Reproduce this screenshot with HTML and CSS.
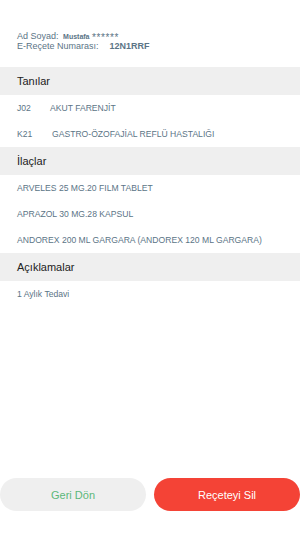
FILE: index.html
```html
<!DOCTYPE html>
<html lang="tr">
<head>
<meta charset="utf-8">
<link rel="stylesheet" href="styles.css">
</head>
<body>
<div class="page">
  <div class="info">
    <div class="line"><span class="lbl">Ad Soyad:</span> <span class="name">Mustafa</span> <span class="stars">******</span></div>
    <div class="line"><span class="lbl">E-Reçete Numarası:</span><span class="no">12N1RRF</span></div>
  </div>
  <div class="band">Tanılar</div>
  <div class="row"><span class="code">J02</span>AKUT FARENJİT</div>
  <div class="row"><span class="code">K21</span><span class="d2">GASTRO-ÖZOFAJİAL REFLÜ HASTALIĞI</span></div>
  <div class="band">İlaçlar</div>
  <div class="row">ARVELES 25 MG.20 FILM TABLET</div>
  <div class="row">APRAZOL 30 MG.28 KAPSUL</div>
  <div class="row">ANDOREX 200 ML GARGARA (ANDOREX 120 ML GARGARA)</div>
  <div class="band">Açıklamalar</div>
  <div class="row">1 Aylık Tedavi</div>
  <div class="spacer"></div>
  <div class="actions">
    <button class="btn back">Geri Dön</button>
    <button class="btn del">Reçeteyi Sil</button>
  </div>
</div>
</body>
</html>
```
FILE: styles.css
```css
* { box-sizing: border-box; }
html, body { margin: 0; padding: 0; background: #fff; }
body { font-family: "Liberation Sans", Arial, sans-serif; }
.page { width: 300px; height: 533px; display: flex; flex-direction: column; }
.info { padding: 31px 0 0 17px; height: 67px; color: #5b7486; font-size: 9px; }
.line { height: 10px; line-height: 10px; white-space: nowrap; }
.name { font-weight: bold; font-size: 7px; margin-left: 2px; }
.stars { font-size: 10px; letter-spacing: 0.6px; display: inline-block; transform: translateY(1.5px); }
.no { font-weight: bold; margin-left: 11px; }
.band { height: 28px; line-height: 28px; background: #efefef; padding-left: 17px; font-size: 11px; color: #222; }
.row { height: 26px; line-height: 26px; padding-left: 17px; font-size: 8.6px; color: #5b7486; white-space: nowrap; }
.code { display: inline-block; width: 33px; }
.d2 { margin-left: 2px; }
.spacer { flex: 1; }
.actions { display: flex; gap: 8px; height: 33px; margin-bottom: 22px; }
.btn { flex: 1; border: none; border-radius: 17px; font-family: inherit; font-size: 11px; padding: 0; }
.back { background: #efefef; color: #5cb87a; }
.del { background: #f44336; color: #fff; }
```
